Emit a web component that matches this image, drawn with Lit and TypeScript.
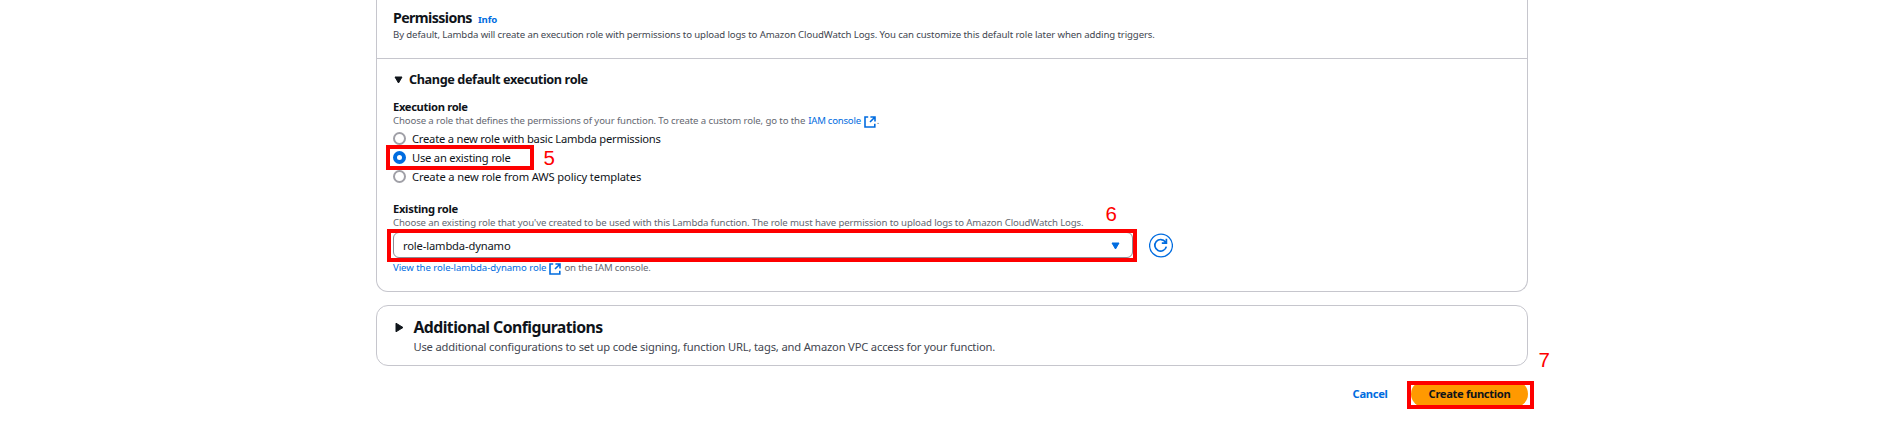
import { LitElement, html, css } from "lit";
import { customElement, state } from "lit/decorators.js";

const externalIcon = html`<svg class="ext" viewBox="0 0 12 12" fill="none" stroke="currentColor" stroke-width="1.6">
  <path d="M4.2 1H1V11H10.8V7.8" />
  <path d="M6.4 1H11V5.6M10.8 1.2L6 6" />
</svg>`;

@customElement("app-root")
export class AppRoot extends LitElement {
  @state() private selected = 1;

  private roles = [
    { text: "Create a new role with basic Lambda permissions", cls: "r0" },
    { text: "Use an existing role", cls: "r1" },
    { text: "Create a new role from AWS policy templates", cls: "r2" },
  ];

  static styles = css`
    :host {
      display: block;
      position: relative;
      box-sizing: border-box;
      height: 434px;
      overflow: hidden;
      background: #fff;
      color: #0f141a;
      font-family: "Noto Sans", "Open Sans", sans-serif;
      font-size: 11.2px;
      white-space: nowrap;
    }
    * { box-sizing: border-box; }
    main { width: 1152px; margin-left: 376px; display: flex; flex-direction: column; }
    .card { border: 1px solid #c6c6cd; }
    .permissions { height: 292px; border-top: 0; border-radius: 0 0 12px 12px; }
    .head { height: 59px; padding: 9px 16px 0; border-bottom: 1px solid #c6c6cd; }
    .title { display: flex; align-items: baseline; gap: 7px; height: 18px; line-height: 18px; }
    h2, h3, p { margin: 0; }
    h2 { font-size: 14.2px; letter-spacing: -0.6px; width: 78px; }
    .info { font-size: 9.6px; font-weight: 700; letter-spacing: -0.17px; }
    a { color: #006ce0; text-decoration: none; }
    .small { display: flex; font-size: 9.6px; line-height: 16px; height: 16px; color: #656871; letter-spacing: -0.117px; }
    .by { color: #424650; letter-spacing: -0.104px; }
    .body { padding: 10px 16px 0; }
    .toggle { display: flex; align-items: center; height: 20px; gap: 6px; padding-left: 1px; }
    .toggle .tri { margin-top: 1px; }
    .toggle h3 { font-size: 12.7px; line-height: 20px; letter-spacing: -0.4px; }
    .tri { width: 9px; height: 8px; display: block; }
    .label { font-weight: 700; line-height: 16px; height: 14px; letter-spacing: -0.34px; }
    .exec { margin-top: 10px; }
    .ext { width: 12px; height: 12px; flex: none; margin: 3px 1px 0 3px; color: #006ce0; }
    .choose { letter-spacing: -0.107px; }
    .iam { letter-spacing: -0.24px; margin-left: 3px; }
    .radios { display: grid; grid-auto-rows: 19px; }
    .radio { display: flex; align-items: center; gap: 6px; line-height: 18px; }
    .dot { width: 13px; height: 13px; border-radius: 50%; border: 2px solid #a0a0a7; background: #fff; }
    .dot.on { border: 4px solid #006ce0; }
    .r0 { letter-spacing: -0.22px; }
    .r1 { letter-spacing: -0.225px; }
    .r2 { letter-spacing: -0.135px; }
    .existing { margin-top: 15px; letter-spacing: -0.31px; }
    .selectrow { display: flex; align-items: center; gap: 16px; height: 26px; margin-top: 1px; }
    .select { width: 740px; height: 26px; border: 1px solid #8c8c94; border-radius: 6px; display: flex; align-items: center; justify-content: space-between; padding: 0 12px 0 9px; letter-spacing: -0.15px; }
    .select .tri { margin-top: 1px; }
    .refresh { width: 24px; height: 25px; display: block; color: #006ce0; }
    .view { margin-top: 2px; }
    .v1 { letter-spacing: -0.058px; }
    .v2 { letter-spacing: -0.16px; margin-left: 2px; }
    .additional { margin-top: 13px; height: 61px; border-radius: 12px; display: flex; padding: 11px 18px; gap: 9px; }
    .additional .tri { width: 10px; height: 11px; margin: 5px 0 0 -1px; }
    .additional h2 { font-size: 15.8px; line-height: 21px; letter-spacing: -0.54px; }
    .additional p { line-height: 18px; letter-spacing: -0.18px; color: #424650; }
    .additional div { padding-left: 0.4px; }
    .actions { display: flex; justify-content: flex-end; align-items: center; margin-top: 15px; height: 26px; gap: 23.5px; font-weight: 700; line-height: 16px; }
    .actions a { letter-spacing: -0.33px; }
    .create { width: 117px; height: 26px; border: 0; border-radius: 13px; background: #ff9900; color: #0f141a; font: inherit; letter-spacing: -0.333px; padding: 0; }
    .mark { position: absolute; border: 4px solid #fe0000; }
    .num { position: absolute; color: #fe0000; font: 20.5px/21px "Liberation Sans", Arial, sans-serif; }
    .m5 { left: 386px; top: 145px; width: 148px; height: 25px; }
    .m6 { left: 387px; top: 229px; width: 750px; height: 33px; }
    .m7 { left: 1407px; top: 381px; width: 127px; height: 28px; }
    .n5 { left: 543.5px; top: 147px; }
    .n6 { left: 1105.5px; top: 203px; }
    .n7 { left: 1538.5px; top: 349px; }
  `;

  render() {
    return html`
      <main>
        <section class="card permissions">
          <div class="head">
            <div class="title"><h2>Permissions</h2><a class="info">Info</a></div>
            <p class="small by">By default, Lambda will create an execution role with permissions to upload logs to Amazon CloudWatch Logs. You can customize this default role later when adding triggers.</p>
          </div>
          <div class="body">
            <div class="toggle">
              <svg class="tri" viewBox="0 0 9 8"><path d="M1 1H8L4.5 7Z" fill="#0f141a" stroke="#0f141a" stroke-linejoin="round" /></svg>
              <h3>Change default execution role</h3>
            </div>
            <div class="label exec">Execution role</div>
            <div class="small"><span class="choose">Choose a role that defines the permissions of your function. To create a custom role, go to the</span><a class="iam">IAM console</a>${externalIcon}<span>.</span></div>
            <div class="radios">
              ${this.roles.map((r, i) => html`
                <div class="radio" @click=${() => (this.selected = i)}>
                  <span class="dot ${i === this.selected ? "on" : ""}"></span><span class=${r.cls}>${r.text}</span>
                </div>`)}
            </div>
            <div class="label existing">Existing role</div>
            <div class="small">Choose an existing role that you've created to be used with this Lambda function. The role must have permission to upload logs to Amazon CloudWatch Logs.</div>
            <div class="selectrow">
              <div class="select"><span>role-lambda-dynamo</span>
                <svg class="tri" viewBox="0 0 9 8"><path d="M1 1H8L4.5 7Z" fill="#006ce0" stroke="#006ce0" stroke-linejoin="round" /></svg>
              </div>
              <svg class="refresh" viewBox="0 0 24 25" fill="none" stroke="currentColor">
                <circle cx="12" cy="12.5" r="11.4" stroke-width="1.3" />
                <path d="M17.3 13.6A5.8 5.8 0 1 1 16.4 9L17.2 10M17.4 5.8V10.2H12.8" stroke-width="1.7" />
              </svg>
            </div>
            <div class="small view"><a class="v1">View the role-lambda-dynamo role</a>${externalIcon}<span class="v2">on the IAM console.</span></div>
          </div>
        </section>
        <section class="card additional">
          <svg class="tri" viewBox="0 0 10 11"><path d="M2 1.2V9.8L9 5.5Z" fill="#0f141a" stroke="#0f141a" stroke-linejoin="round" /></svg>
          <div>
            <h2>Additional Configurations</h2>
            <p>Use additional configurations to set up code signing, function URL, tags, and Amazon VPC access for your function.</p>
          </div>
        </section>
        <div class="actions"><a>Cancel</a><button class="create">Create function</button></div>
      </main>
      <div class="mark m5"></div><span class="num n5">5</span>
      <div class="mark m6"></div><span class="num n6">6</span>
      <div class="mark m7"></div><span class="num n7">7</span>
    `;
  }
}
